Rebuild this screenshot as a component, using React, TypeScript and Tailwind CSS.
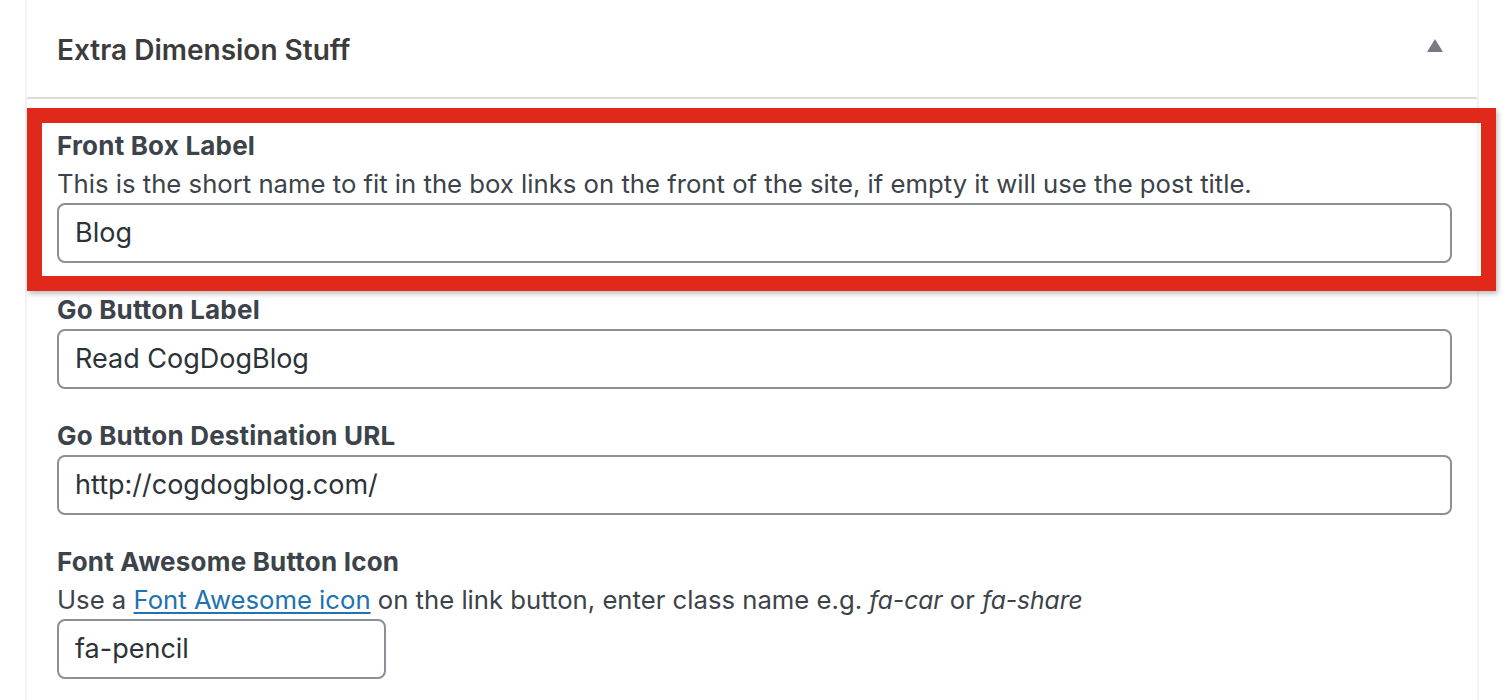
import React from "react";

const font = { fontFamily: "Inter, 'Liberation Sans', sans-serif" };

interface FieldProps {
  label: string;
  description?: React.ReactNode;
  value: string;
  short?: boolean;
}

const Field = ({ label, description, value, short }: FieldProps) => (
  <div className="flex flex-col">
    <label className="text-[26px] leading-[36px] font-bold tracking-[0.2px] text-[#3c434a]">{label}</label>
    {description && (
      <p className="mt-[2px] text-[25.7px] leading-[36px] text-[#3c434a]">{description}</p>
    )}
    <div
      className={`mt-[1px] flex h-[60px] items-center rounded-[8px] border-2 border-[#8c8f94] bg-white px-[16px] text-[27px] text-[#2c3338] ${
        short ? "w-[329px]" : "w-full"
      }`}
    >
      {value}
    </div>
  </div>
);

export default function App() {
  return (
    <div className="h-[700px] w-[1506px] overflow-hidden bg-white" style={font}>
      <div className="ml-[25px] h-full w-[1454px] border-x-2 border-[#f3f3f4] bg-white">
        {/* header */}
        <div className="flex h-[99px] items-center justify-between border-b-2 border-[#dcdcde] pl-[30px] pr-[34px] pt-[2px]">
          <h2 className="text-[28px] font-semibold text-[#3c3c3c]">Extra Dimension Stuff</h2>
          <svg width="16" height="13" viewBox="0 0 16 13" className="mb-[8px]">
            <polygon points="8,0 16,13 0,13" fill="#787c82" />
          </svg>
        </div>

        <div className="flex flex-col gap-[29px] pl-[30px] pr-[25px] pt-[29px]">
          <div className="relative">
            {/* red annotation frame */}
            <div className="pointer-events-none absolute -left-[30px] -right-[44px] -top-[20px] -bottom-[28px] border-[15px] border-[#e0281b] shadow-[2px_3px_5px_rgba(0,0,0,0.25)]" />
            <Field
              label="Front Box Label"
              description="This is the short name to fit in the box links on the front of the site, if empty it will use the post title."
              value="Blog"
            />
          </div>

          <Field label="Go Button Label" value="Read CogDogBlog" />
          <Field label="Go Button Destination URL" value="http://cogdogblog.com/" />
          <Field
            label="Font Awesome Button Icon"
            description={
              <>
                Use a{" "}
                <a href="#" className="text-[#2271b1] underline underline-offset-[3px]">
                  Font Awesome icon
                </a>{" "}
                on the link button, enter class name e.g. <em className="text-[24.6px]">fa-car</em> or{" "}
                <em className="text-[24.6px]">fa-share</em>
              </>
            }
            value="fa-pencil"
            short
          />
        </div>
      </div>
    </div>
  );
}
